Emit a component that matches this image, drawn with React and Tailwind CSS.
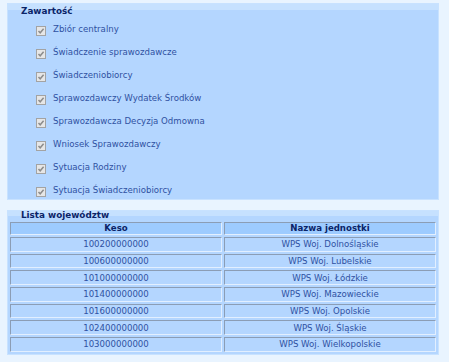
const pozycje = [
  "Zbiór centralny",
  "Świadczenie sprawozdawcze",
  "Świadczeniobiorcy",
  "Sprawozdawczy Wydatek Środków",
  "Sprawozdawcza Decyzja Odmowna",
  "Wniosek Sprawozdawczy",
  "Sytuacja Rodziny",
  "Sytuacja Świadczeniobiorcy",
];

const wojewodztwa = [
  ["100200000000", "WPS Woj. Dolnośląskie"],
  ["100600000000", "WPS Woj. Lubelskie"],
  ["101000000000", "WPS Woj. Łódzkie"],
  ["101400000000", "WPS Woj. Mazowieckie"],
  ["101600000000", "WPS Woj. Opolskie"],
  ["102400000000", "WPS Woj. Śląskie"],
  ["103000000000", "WPS Woj. Wielkopolskie"],
];

// wyłączony, zaznaczony checkbox
const Checkbox = () => (
  <svg width="10" height="10" viewBox="0 0 10 10" className="shrink-0 mt-[3px]">
    <rect x="0.5" y="0.5" width="9" height="9" fill="#e6e6e6" stroke="#a3a3a3" />
    <path d="M2.5 5 L4.2 6.8 L7.6 2.8" fill="none" stroke="#8c8c8c" strokeWidth="1.5" />
  </svg>
);

export default function App() {
  return (
    <div className="w-[449px] h-[362px] bg-[#e9f4ff] pt-[3px] pl-[7px] font-['DejaVu_Sans',sans-serif] text-[8.6px] text-[#2f51a2]">
      {/* Zawartość */}
      <div className="w-[432px] h-[197px] overflow-hidden border border-[#c8e2ff] bg-[linear-gradient(#c6e1ff_0_6px,#b4d6ff_6px)]">
        <div className="h-[14px] pl-[13px] leading-[14px] font-bold text-[8.8px] text-[#0b2468]">Zawartość</div>
        {pozycje.map((p) => (
          <div key={p} className="h-[23px] flex items-center gap-[7px] pl-[28px]">
            <Checkbox />
            <span>{p}</span>
          </div>
        ))}
      </div>

      {/* Lista województw */}
      <div className="mt-[10px] w-[432px] border border-[#c8e2ff] bg-[linear-gradient(#c6e1ff_0_5px,#b4d6ff_5px)]">
        <div className="h-[9px] pl-[13px] leading-[9px] font-bold text-[8.8px] text-[#0b2468]">Lista województw</div>
        <table className="w-full border-separate border-spacing-[2px] table-fixed">
          <thead>
            <tr>
              <th className="h-[13px] p-0 leading-[11px] font-bold text-[#0b2468] bg-[#9dcbff] border border-t-[#8b9db5] border-l-[#8b9db5] border-b-[#e2efff] border-r-[#e2efff]">Keso</th>
              <th className="h-[13px] p-0 leading-[11px] font-bold text-[#0b2468] bg-[#9dcbff] border border-t-[#8b9db5] border-l-[#8b9db5] border-b-[#e2efff] border-r-[#e2efff]">Nazwa jednostki</th>
            </tr>
          </thead>
          <tbody>
            {wojewodztwa.map(([keso, nazwa]) => (
              <tr key={keso}>
                <td className="h-[14.67px] p-0 text-center leading-[12px] bg-[#b4d6ff] border border-t-[#8b9db5] border-l-[#8b9db5] border-b-[#e2efff] border-r-[#e2efff]">{keso}</td>
                <td className="h-[14.67px] p-0 text-center leading-[12px] bg-[#b4d6ff] border border-t-[#8b9db5] border-l-[#8b9db5] border-b-[#e2efff] border-r-[#e2efff]">{nazwa}</td>
              </tr>
            ))}
          </tbody>
        </table>
      </div>
    </div>
  );
}
